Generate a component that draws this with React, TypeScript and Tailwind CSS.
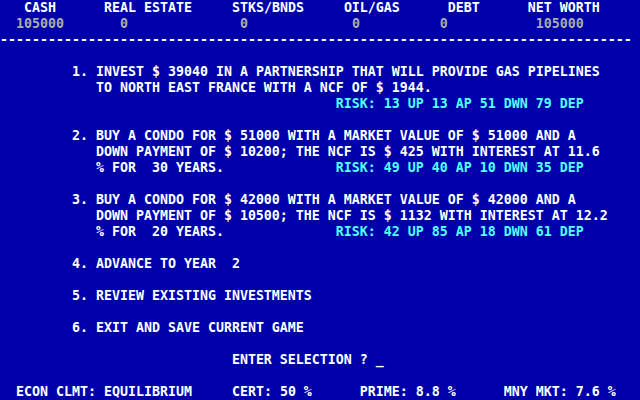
type Seg = { col: number; text: string; tone?: "white" | "gray" | "cyan" };

const toneClass = {
  white: "text-white",
  gray: "text-[#aaaaaa]",
  cyan: "text-[#55ffff]",
};

// 80x25 text screen, each row is a list of segments placed at a column
const screen: Seg[][] = [
  [
    { col: 3, text: "CASH" },
    { col: 13, text: "REAL ESTATE" },
    { col: 29, text: "STKS/BNDS" },
    { col: 43, text: "OIL/GAS" },
    { col: 56, text: "DEBT" },
    { col: 66, text: "NET WORTH" },
  ],
  [
    { col: 2, text: "105000", tone: "gray" },
    { col: 15, text: "0", tone: "gray" },
    { col: 30, text: "0", tone: "gray" },
    { col: 44, text: "0", tone: "gray" },
    { col: 55, text: "0", tone: "gray" },
    { col: 67, text: "105000", tone: "gray" },
  ],
  [{ col: 0, text: "-".repeat(79) }],
  [],
  [{ col: 9, text: "1. INVEST $ 39040 IN A PARTNERSHIP THAT WILL PROVIDE GAS PIPELINES" }],
  [{ col: 12, text: "TO NORTH EAST FRANCE WITH A NCF OF $ 1944." }],
  [{ col: 42, text: "RISK: 13 UP 13 AP 51 DWN 79 DEP", tone: "cyan" }],
  [],
  [{ col: 9, text: "2. BUY A CONDO FOR $ 51000 WITH A MARKET VALUE OF $ 51000 AND A" }],
  [{ col: 12, text: "DOWN PAYMENT OF $ 10200; THE NCF IS $ 425 WITH INTEREST AT 11.6" }],
  [
    { col: 12, text: "% FOR  30 YEARS." },
    { col: 42, text: "RISK: 49 UP 40 AP 10 DWN 35 DEP", tone: "cyan" },
  ],
  [],
  [{ col: 9, text: "3. BUY A CONDO FOR $ 42000 WITH A MARKET VALUE OF $ 42000 AND A" }],
  [{ col: 12, text: "DOWN PAYMENT OF $ 10500; THE NCF IS $ 1132 WITH INTEREST AT 12.2" }],
  [
    { col: 12, text: "% FOR  20 YEARS." },
    { col: 42, text: "RISK: 42 UP 85 AP 18 DWN 61 DEP", tone: "cyan" },
  ],
  [],
  [{ col: 9, text: "4. ADVANCE TO YEAR  2" }],
  [],
  [{ col: 9, text: "5. REVIEW EXISTING INVESTMENTS" }],
  [],
  [{ col: 9, text: "6. EXIT AND SAVE CURRENT GAME" }],
  [],
  [{ col: 29, text: "ENTER SELECTION ? _" }],
  [],
  [
    { col: 2, text: "ECON CLMT: EQUILIBRIUM" },
    { col: 29, text: "CERT: 50 %" },
    { col: 45, text: "PRIME: 8.8 %" },
    { col: 63, text: "MNY MKT: 7.6 %" },
  ],
];

function Row({ segs }: { segs: Seg[] }) {
  let cursor = 0;
  return (
    <div className="h-4 leading-4 whitespace-pre">
      {segs.map((s, i) => {
        const pad = " ".repeat(Math.max(0, s.col - cursor));
        cursor = s.col + s.text.length;
        return (
          <span key={i}>
            {pad}
            <span className={toneClass[s.tone ?? "white"]}>{s.text}</span>
          </span>
        );
      })}
      {segs.length === 0 ? " " : null}
    </div>
  );
}

export default function App() {
  return (
    <div
      className="w-[640px] h-[400px] overflow-hidden bg-[#0000aa] text-white font-bold text-[13.29px]"
      style={{ fontFamily: '"DejaVu Sans Mono", "Liberation Mono", monospace' }}
    >
      {screen.map((segs, i) => (
        <Row key={i} segs={segs} />
      ))}
    </div>
  );
}
